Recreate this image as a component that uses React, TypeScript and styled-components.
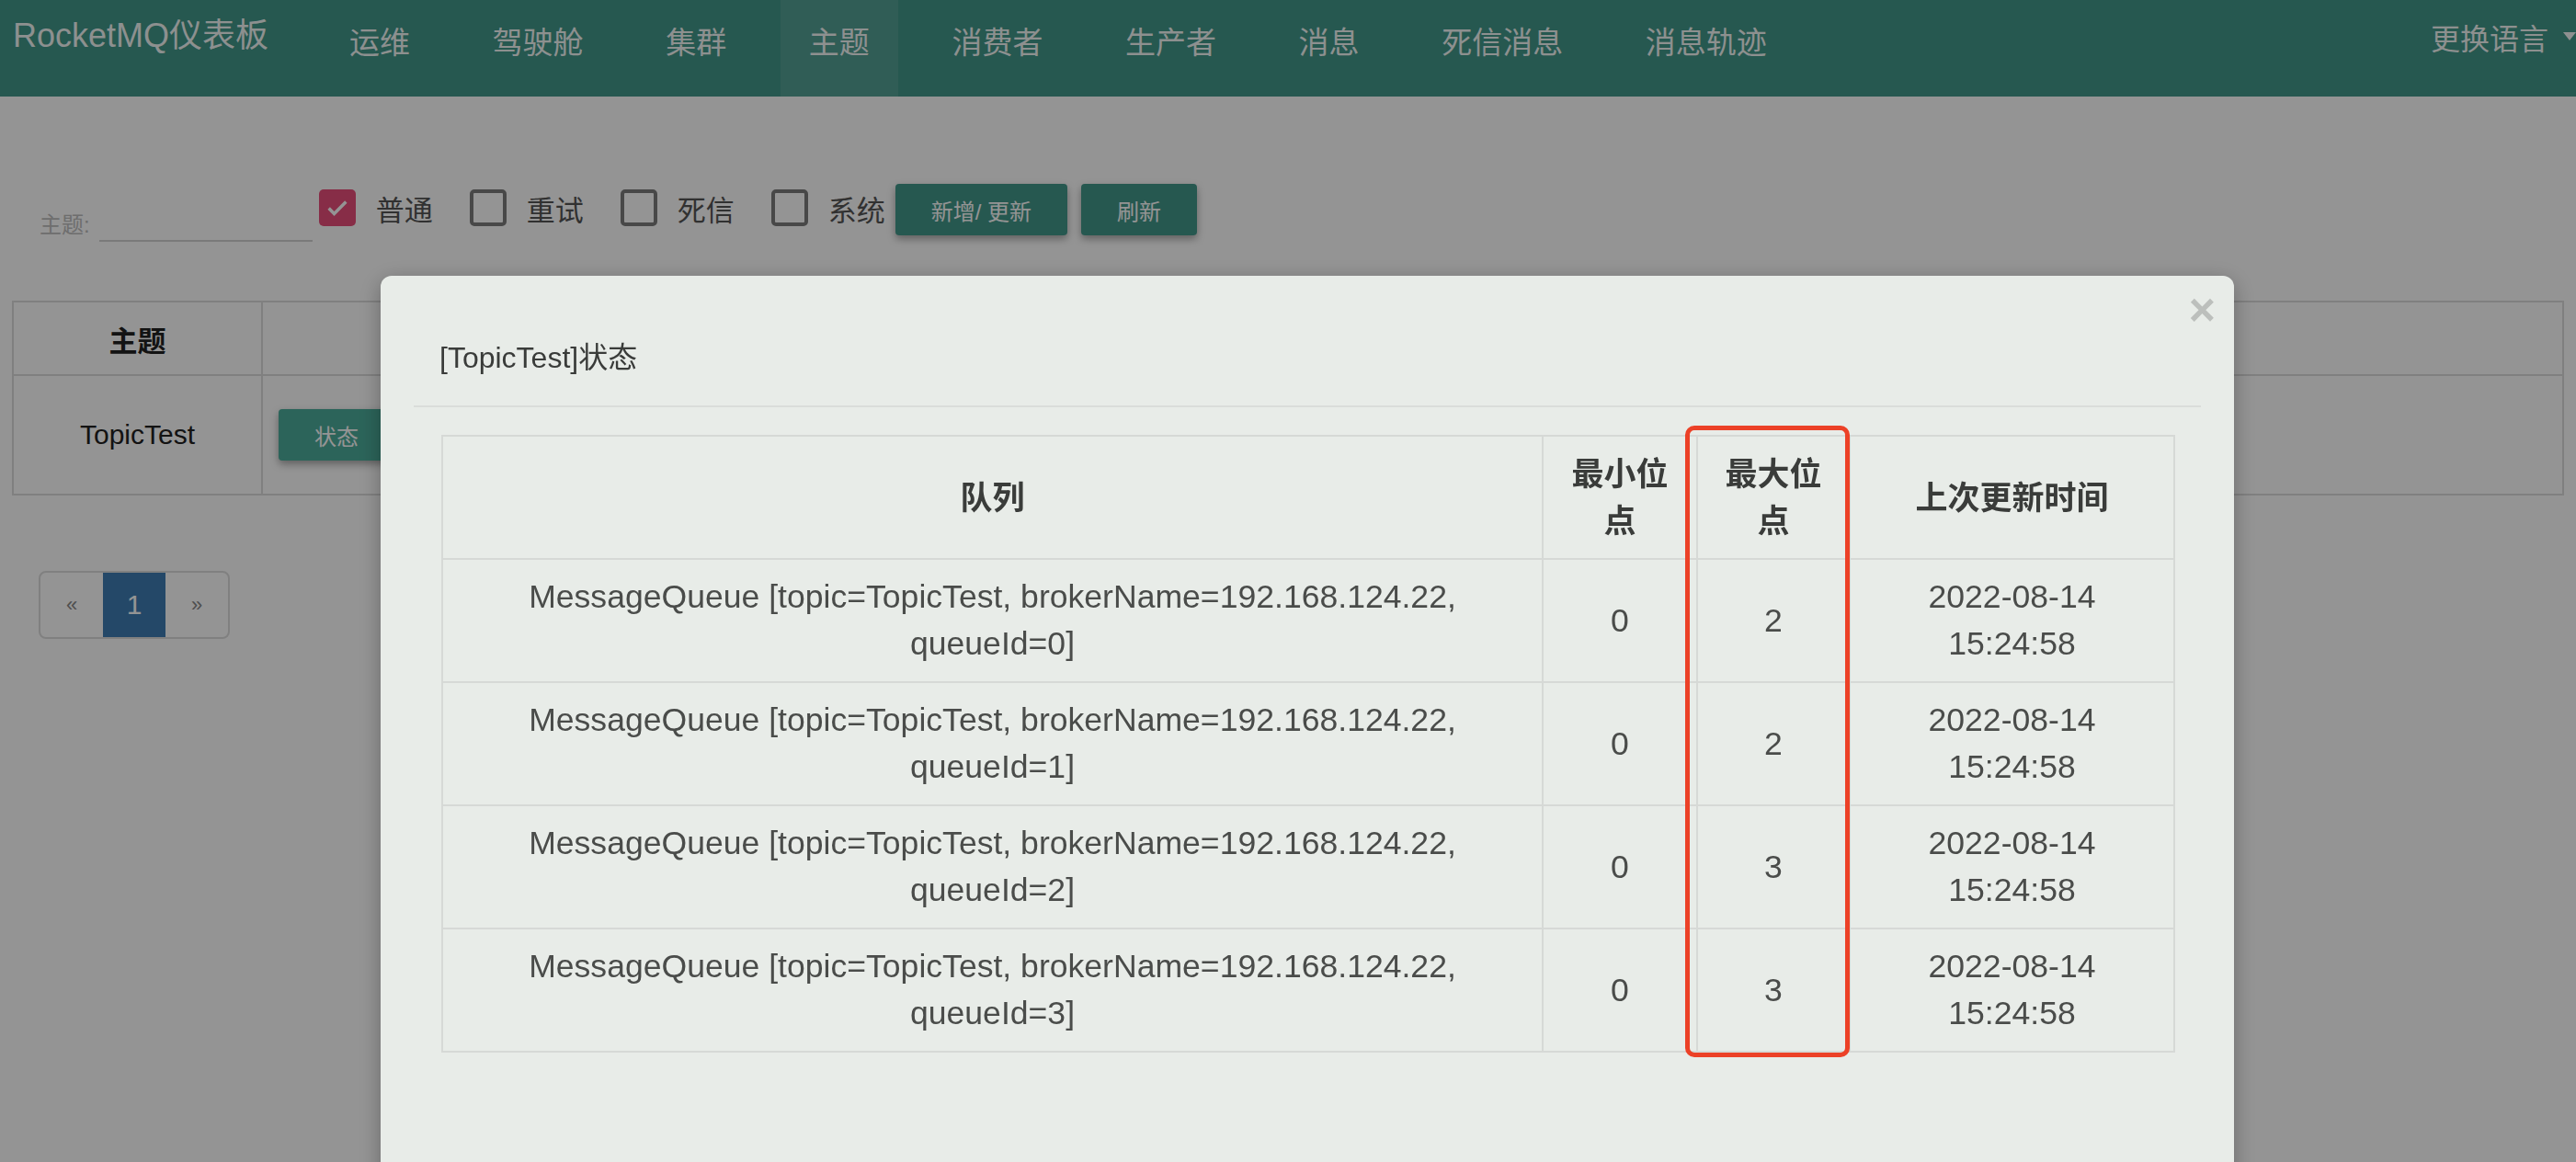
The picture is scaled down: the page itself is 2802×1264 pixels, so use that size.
import React from "react";
import styled, { createGlobalStyle } from "styled-components";

const GlobalStyle = createGlobalStyle`
  html, body {
    margin: 0;
    padding: 0;
  }
  body {
    width: 2802px;
    height: 1264px;
    overflow: hidden;
    background: #ffffff;
    color: #333;
    font-family: "Helvetica Neue", "Liberation Sans", "Noto Sans CJK SC", sans-serif;
  }
`;

const NavBar = styled.nav`
  height: 105px;
  background: #42988a;
  display: flex;
  align-items: stretch;
  color: rgba(255, 255, 255, 0.94);
`;

const Brand = styled.div`
  width: 349px;
  box-sizing: border-box;
  padding: 15px 0 0 14px;
  font-size: 36px;
  line-height: 48px;
  white-space: nowrap;
`;

const NavLink = styled.div<{ active?: boolean }>`
  display: flex;
  align-items: center;
  padding: 0 31px 17px;
  margin-right: 27.6px;
  font-size: 33px;
  white-space: nowrap;
  background: ${(p) => (p.active ? "rgba(255,255,255,0.09)" : "transparent")};
`;

const LangMenu = styled.div`
  margin-left: auto;
  display: flex;
  align-items: center;
  gap: 16px;
  padding-bottom: 26px;
  font-size: 32px;
  white-space: nowrap;
`;

const Caret = styled.span`
  width: 0;
  height: 0;
  border-left: 7px solid transparent;
  border-right: 7px solid transparent;
  border-top: 9px solid rgba(255, 255, 255, 0.94);
`;

const Content = styled.main`
  padding: 0 13px;
`;

const Toolbar = styled.div`
  display: flex;
  align-items: center;
  margin-top: 88px;
  padding-left: 30px;
`;

const TopicField = styled.div`
  height: 70px;
  display: flex;
  align-items: flex-end;
  margin-right: 7px;
`;

const FieldLabel = styled.label`
  font-size: 24px;
  line-height: 28px;
  color: #bdbdbd;
  margin: 0 10px 4px 0;
`;

const FieldInput = styled.div`
  width: 232px;
  height: 40px;
  border-bottom: 2px solid #d2d2d2;
`;

const CheckItem = styled.label`
  display: flex;
  align-items: center;
  gap: 22px;
  margin-right: 40px;
  padding-bottom: 4px;
  font-size: 31px;
  color: #555;
  &:last-of-type {
    margin-right: 11px;
  }
`;

const CheckBox = styled.span<{ checked?: boolean }>`
  width: 40px;
  height: 40px;
  box-sizing: border-box;
  border-radius: 5px;
  display: flex;
  align-items: center;
  justify-content: center;
  background: ${(p) => (p.checked ? "#e84f7a" : "transparent")};
  border: ${(p) => (p.checked ? "none" : "4px solid #7d7d7d")};
`;

const Button = styled.button<{ tone?: string }>`
  height: 56px;
  padding: 0 39px;
  margin-right: 15px;
  border: none;
  border-radius: 4px;
  background: ${(p) => p.tone || "#42988a"};
  color: #fff;
  font-family: inherit;
  font-size: 24px;
  white-space: nowrap;
  box-shadow: 0 4px 8px rgba(0, 0, 0, 0.35);
`;

const TopicTable = styled.table`
  width: 100%;
  margin-top: 64px;
  border-collapse: collapse;
  table-layout: fixed;
  border: 2px solid #dddddd;
  th, td {
    border: 2px solid #dddddd;
    text-align: center;
    vertical-align: middle;
    color: #222;
  }
  th {
    height: 76px;
    font-size: 31px;
    font-weight: bold;
  }
  td {
    height: 126px;
    font-size: 30px;
  }
`;

const ActionCell = styled.td`
  && {
    text-align: left;
    padding-left: 17px;
  }
`;

const ActionRow = styled.div`
  display: flex;
  gap: 12px;
`;

const Pager = styled.ul`
  display: flex;
  list-style: none;
  margin: 82px 0 0 29px;
  padding: 0;
  width: max-content;
  border: 2px solid #dddddd;
  border-radius: 8px;
  overflow: hidden;
`;

const PageItem = styled.li<{ active?: boolean }>`
  width: 68px;
  height: 70px;
  display: flex;
  align-items: center;
  justify-content: center;
  font-size: ${(p) => (p.active ? "30px" : "22px")};
  color: ${(p) => (p.active ? "#fff" : "#888")};
  background: ${(p) => (p.active ? "#3f7db4" : "transparent")};
`;

const Backdrop = styled.div`
  position: fixed;
  inset: 0;
  background: rgba(0, 0, 0, 0.42);
`;

const Modal = styled.div`
  position: fixed;
  left: 414px;
  top: 300px;
  width: 2016px;
  height: 1100px;
  box-sizing: border-box;
  padding: 0 36px;
  background: #e8ece8;
  border-radius: 12px;
  box-shadow: 0 6px 24px rgba(0, 0, 0, 0.3);
`;

const CloseBtn = styled.span`
  position: absolute;
  top: 12px;
  right: 20px;
  font-size: 50px;
  line-height: 50px;
  font-weight: bold;
  color: #bcbfbc;
`;

const ModalHeader = styled.div`
  padding: 68px 28px 30px;
  border-bottom: 2px solid #dadddA;
`;

const ModalTitle = styled.h4`
  margin: 0;
  font-size: 32px;
  line-height: 43px;
  font-weight: normal;
  color: #3a3c3a;
`;

const ModalBody = styled.div`
  padding: 30px;
`;

const TableWrap = styled.div`
  position: relative;
`;

const StatusTable = styled.table`
  width: 1884px;
  border-collapse: collapse;
  table-layout: fixed;
  th, td {
    border: 2px solid #d6d9d6;
    padding: 15px 17px;
    text-align: center;
    vertical-align: middle;
    font-size: 35.6px;
    line-height: 51px;
  }
  th {
    font-size: 35px;
    font-weight: bold;
    color: #3a3c3a;
  }
  td {
    color: #4a4c4a;
  }
`;

const Highlight = styled.div`
  position: absolute;
  left: 1353px;
  top: -10px;
  width: 179px;
  height: 687px;
  box-sizing: border-box;
  border: 5px solid #ec4127;
  border-radius: 10px;
  pointer-events: none;
`;

const navItems = ["运维", "驾驶舱", "集群", "主题", "消费者", "生产者", "消息", "死信消息", "消息轨迹"];
const filters = [
  { label: "普通", checked: true },
  { label: "重试", checked: false },
  { label: "死信", checked: false },
  { label: "系统", checked: false },
];
const queues = [
  { id: 0, min: 0, max: 2 },
  { id: 1, min: 0, max: 2 },
  { id: 2, min: 0, max: 3 },
  { id: 3, min: 0, max: 3 },
];

const Check = () => (
  <svg width="28" height="28" viewBox="0 0 24 24">
    <path d="M4 12.5l5 5L20 6.5" fill="none" stroke="#ffffff" strokeWidth="3" />
  </svg>
);

export default function App() {
  return (
    <>
      <GlobalStyle />
      <NavBar>
        <Brand>RocketMQ仪表板</Brand>
        {navItems.map((item) => (
          <NavLink key={item} active={item === "主题"}>
            {item}
          </NavLink>
        ))}
        <LangMenu>
          更换语言
          <Caret />
        </LangMenu>
      </NavBar>
      <Content>
        <Toolbar>
          <TopicField>
            <FieldLabel>主题:</FieldLabel>
            <FieldInput />
          </TopicField>
          {filters.map((f) => (
            <CheckItem key={f.label}>
              <CheckBox checked={f.checked}>{f.checked && <Check />}</CheckBox>
              {f.label}
            </CheckItem>
          ))}
          <Button>新增/ 更新</Button>
          <Button>刷新</Button>
        </Toolbar>
        <TopicTable>
          <colgroup>
            <col style={{ width: "271px" }} />
            <col />
          </colgroup>
          <thead>
            <tr>
              <th>主题</th>
              <th>操作</th>
            </tr>
          </thead>
          <tbody>
            <tr>
              <td>TopicTest</td>
              <ActionCell>
                <ActionRow>
                  <Button tone="#4cad9b">状态</Button>
                  <Button tone="#4cad9b">路由</Button>
                  <Button tone="#4cad9b">Consumer管理</Button>
                  <Button tone="#4cad9b">Topic配置</Button>
                  <Button tone="#4cad9b">发送消息</Button>
                  <Button tone="#e84f7a">删除</Button>
                </ActionRow>
              </ActionCell>
            </tr>
          </tbody>
        </TopicTable>
        <Pager>
          <PageItem>«</PageItem>
          <PageItem active>1</PageItem>
          <PageItem>»</PageItem>
        </Pager>
      </Content>
      <Backdrop />
      <Modal>
        <CloseBtn>×</CloseBtn>
        <ModalHeader>
          <ModalTitle>[TopicTest]状态</ModalTitle>
        </ModalHeader>
        <ModalBody>
          <TableWrap>
            <StatusTable>
              <colgroup>
                <col style={{ width: "1197px" }} />
                <col style={{ width: "168px" }} />
                <col style={{ width: "166px" }} />
                <col style={{ width: "353px" }} />
              </colgroup>
              <thead>
                <tr>
                  <th>队列</th>
                  <th>最小位点</th>
                  <th>最大位点</th>
                  <th>上次更新时间</th>
                </tr>
              </thead>
              <tbody>
                {queues.map((q) => (
                  <tr key={q.id}>
                    <td>
                      MessageQueue [topic=TopicTest, brokerName=192.168.124.22, queueId={q.id}]
                    </td>
                    <td>{q.min}</td>
                    <td>{q.max}</td>
                    <td>2022-08-14 15:24:58</td>
                  </tr>
                ))}
              </tbody>
            </StatusTable>
            <Highlight />
          </TableWrap>
        </ModalBody>
      </Modal>
    </>
  );
}
